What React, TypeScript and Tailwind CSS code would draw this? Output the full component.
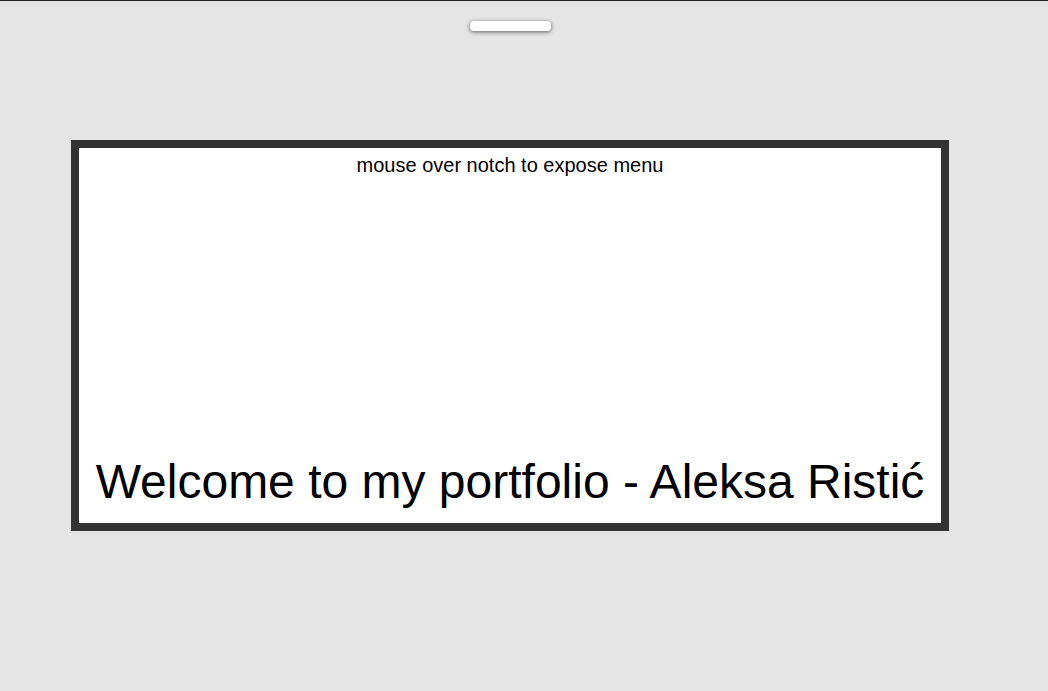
import React from 'react';

const App: React.FC = () => {
  return (
    <div className="min-h-[691px] w-full bg-[#e5e5e5] border-t border-[#222] font-['Liberation_Sans',Arial,sans-serif] text-black">
      <div className="w-[878px] ml-[71px] flex justify-center pt-[20px]">
        <div className="w-[81px] h-[10px] rounded-[4px] bg-white shadow-[0_1px_4px_rgba(0,0,0,0.6)]" />
      </div>

      <div className="pl-[71px] pt-[109px]">
        <div className="w-[878px] h-[391px] border-[8px] border-[#333] bg-white flex flex-col items-center justify-between text-center">
          <p className="text-[20px] leading-[23px] pt-[6px]">mouse over notch to expose menu</p>
          <h1 className="text-[48px] leading-[55px] pb-[14px] whitespace-nowrap">Welcome to my portfolio - Aleksa Ristić</h1>
        </div>
      </div>
    </div>
  );
};

export default App;
